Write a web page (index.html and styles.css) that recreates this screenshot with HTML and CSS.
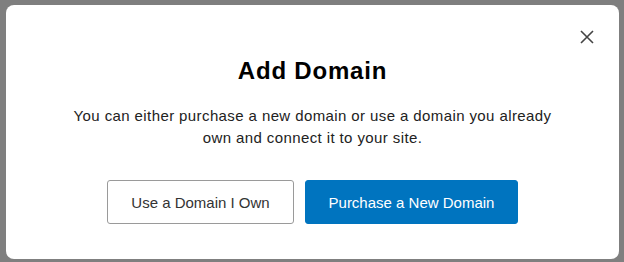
FILE: index.html
```html
<!DOCTYPE html>
<html>
<head>
    <link rel="stylesheet" href="styles.css">
</head>
<body>
    <div class="overlay">
        <div class="dialog">
            <button class="close" aria-label="Close">
                <svg width="16" height="16" viewBox="0 0 16 16">
                    <path d="M2 2 L14 14 M14 2 L2 14" stroke="#444" stroke-width="1.6" fill="none"/>
                </svg>
            </button>
            <h2 class="title">Add Domain</h2>
            <p class="text">You can either purchase a new domain or use a domain you already own and connect it to your site.</p>
            <div class="actions">
                <button class="btn btn-outline">Use a Domain I Own</button>
                <button class="btn btn-primary">Purchase a New Domain</button>
            </div>
        </div>
    </div>
</body>
</html>
```

FILE: styles.css
```css
body {
    margin: 0;
    padding: 0;
    background-color: #7f7f7f;
    font-family: "Liberation Sans", Arial, sans-serif;
}

.overlay {
    display: flex;
    padding: 5px 5px 3px 6px;
    height: 262px;
    box-sizing: border-box;
}

.dialog {
    position: relative;
    flex: 1;
    background-color: #fff;
    border-radius: 8px;
    display: flex;
    flex-direction: column;
    align-items: center;
    padding-top: 52px;
    box-sizing: border-box;
}

.close {
    position: absolute;
    top: 24px;
    right: 24px;
    padding: 0;
    border: none;
    background: none;
    cursor: pointer;
}

.title {
    margin: 0;
    font-size: 24px;
    line-height: 28px;
    font-weight: bold;
    letter-spacing: 0.8px;
    color: #000;
}

.text {
    margin: 20px 0 0;
    width: 484px;
    text-align: center;
    font-size: 15px;
    line-height: 22px;
    letter-spacing: 0.4px;
    color: #222;
}

.actions {
    display: flex;
    gap: 11px;
    margin-top: 31px;
}

.btn {
    height: 44px;
    font-family: "Liberation Sans", Arial, sans-serif;
    font-size: 15px;
    border-radius: 3px;
    cursor: pointer;
}

.btn-outline {
    width: 187px;
    background-color: #fff;
    border: 1px solid #9a9a9a;
    color: #333;
}

.btn-primary {
    width: 213px;
    background-color: #0074bf;
    border: 1px solid #0074bf;
    color: #fff;
}
```
